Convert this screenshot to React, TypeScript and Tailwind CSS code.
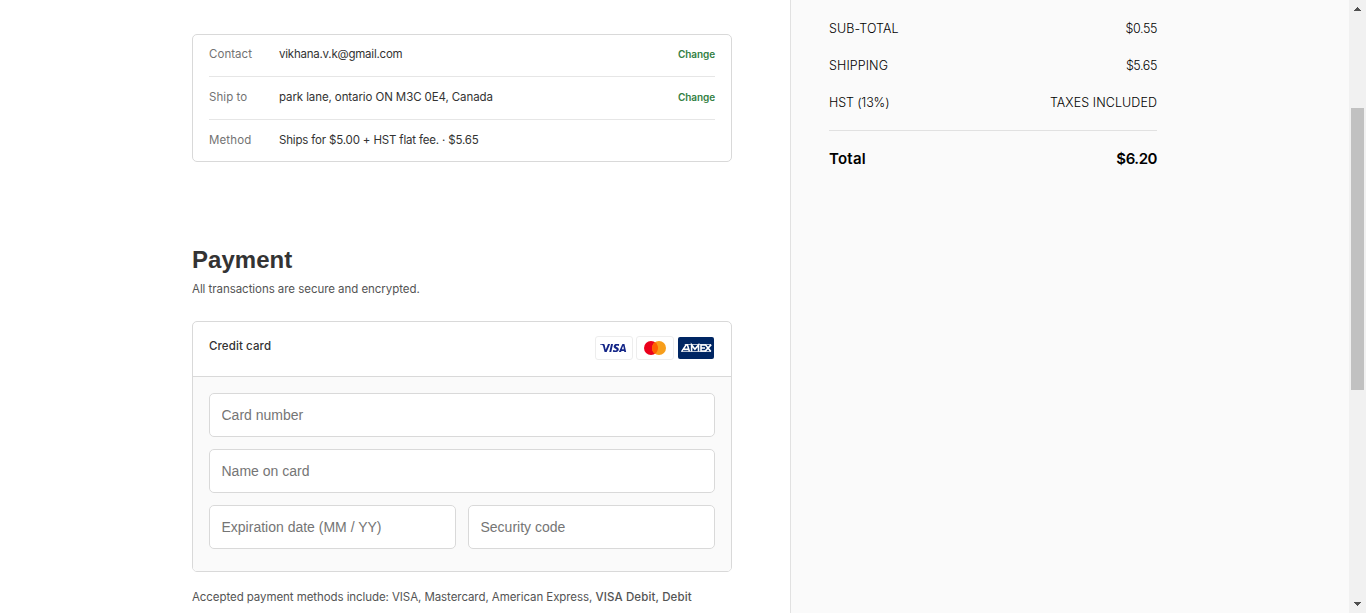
import type { ReactNode } from "react";

type ReviewRow = {
  label: string;
  labelSpacing: string;
  value: string;
  valueSpacing: string;
  editable: boolean;
};

const reviewRows: ReviewRow[] = [
  { label: "Contact", labelSpacing: "tracking-[0.04px]", value: "vikhana.v.k@gmail.com", valueSpacing: "tracking-[-0.22px]", editable: true },
  { label: "Ship to", labelSpacing: "tracking-[0.07px]", value: "park lane, ontario ON M3C 0E4, Canada", valueSpacing: "tracking-[-0.1px]", editable: true },
  { label: "Method", labelSpacing: "tracking-[0.12px]", value: "Ships for $5.00 + HST flat fee. · $5.65", valueSpacing: "tracking-[-0.165px]", editable: false },
];

const summaryRows = [
  { label: "SUB-TOTAL", labelSpacing: "tracking-[0.08px]", amount: "$0.55", amountSpacing: "tracking-[-0.4px]" },
  { label: "SHIPPING", labelSpacing: "tracking-[0.12px]", amount: "$5.65", amountSpacing: "tracking-[-0.4px]" },
  { label: "HST (13%)", labelSpacing: "tracking-[-0.12px]", amount: "TAXES INCLUDED", amountSpacing: "tracking-[0.08px]" },
];

function Field({ placeholder }: { placeholder: string }) {
  return (
    <input
      placeholder={placeholder}
      className="h-11 w-full min-w-0 rounded-[5px] border border-[#d9d9d9] bg-white px-[11.5px] font-['Liberation_Sans',sans-serif] text-sm outline-none placeholder:text-[#757575]"
    />
  );
}

function Review() {
  return (
    <section className="h-32 rounded-[5px] border border-[#d9d9d9] px-4 text-[11.5px] leading-4">
      {reviewRows.map((row, i) => (
        <div
          key={row.label}
          className={i === 0 ? "flex h-[41px] items-start pt-[11px]" : "flex h-[43px] items-start border-t border-[#e6e6e6] pt-3"}
        >
          <span className={`w-[70px] text-[#737373] ${row.labelSpacing}`}>{row.label}</span>
          <span className={`flex-1 text-[#333] ${row.valueSpacing}`}>{row.value}</span>
          {row.editable && (
            <a className="text-[10px] font-semibold leading-4 tracking-[-0.1px] text-[#338043]">Change</a>
          )}
        </div>
      ))}
    </section>
  );
}

function CardFrame({ children }: { children: ReactNode }) {
  return (
    <svg width="38" height="24" viewBox="0 0 38 24" fill="none">
      <rect x="0.5" y="0.5" width="37" height="23" rx="2.5" fill="#fff" stroke="#ededed" />
      {children}
    </svg>
  );
}

function VisaMark() {
  return (
    <CardFrame>
      <path
        transform="translate(0 0.1)"
        fill="#142688"
        d="M28.3 10.1H28c-.4 1-.7 1.5-1 3h1.9c-.3-1.5-.3-2.2-.6-3zm2.9 5.9h-1.7c-.1 0-.1 0-.2-.1l-.2-.9-.1-.2h-2.4c-.1 0-.2 0-.2.2l-.3.9c0 .1-.1.1-.1.1h-2.1l.2-.5L27 8.7c0-.5.3-.7.8-.7h1.5c.1 0 .2 0 .2.2l1.4 6.5c.1.4.2.7.2 1.1.1.1.1.1.1.2zm-13.4-.3l.4-1.8c.1 0 .2.1.2.1.7.3 1.4.5 2.1.4.2 0 .5-.1.7-.2.5-.2.5-.7.1-1.1-.2-.2-.5-.3-.8-.5-.4-.2-.8-.4-1.1-.7-1.2-1-.8-2.4-.1-3.1.6-.4.9-.8 1.7-.8 1.2 0 2.5 0 3.1.2h.1c-.1.6-.2 1.1-.4 1.7-.5-.2-1-.4-1.5-.4-.3 0-.6 0-.9.1-.2 0-.3.1-.4.2-.2.2-.2.5 0 .7l.5.4c.4.2.8.4 1.1.6.5.3 1 .8 1.1 1.4.2.9-.1 1.7-.9 2.3-.5.4-.7.6-1.4.6-1.4 0-2.5.1-3.4-.2-.1.2-.1.2-.2.1zm-3.5.3c.1-.7.1-.7.2-1 .5-2.2 1-4.5 1.4-6.7.1-.2.1-.3.3-.3H18c-.2 1.2-.4 2.1-.7 3.2-.3 1.5-.6 3-1 4.5 0 .2-.1.2-.3.2M5 8.2c0-.1.2-.2.3-.2h3.4c.5 0 .9.3 1 .8l.9 4.4c0 .1 0 .1.1.2 0-.1.1-.1.1-.1l2.1-5.1c-.1-.1 0-.2.1-.2h2.1c0 .1 0 .1-.1.2l-3.1 7.3c-.1.2-.1.3-.2.4-.1.1-.3 0-.5 0H9.7c-.1 0-.2 0-.2-.2L7.9 9.5c-.2-.2-.5-.5-.9-.6-.6-.3-1.7-.5-1.9-.5L5 8.2z"
      />
    </CardFrame>
  );
}

function MastercardMark() {
  return (
    <CardFrame>
      <circle cx="15" cy="12" r="7" fill="#eb001b" />
      <circle cx="23" cy="12" r="7" fill="#f79e1b" />
      <path fill="#ff5f00" d="M22 12c0-2.4-1.2-4.5-3-5.7-1.8 1.3-3 3.4-3 5.7s1.2 4.5 3 5.7c1.8-1.2 3-3.3 3-5.7z" />
    </CardFrame>
  );
}

function AmexMark() {
  return (
    <svg width="38" height="24" viewBox="0 0 38 24" fill="none">
      <rect x="1" y="1" width="36" height="22" rx="2" fill="#002663" />
      <path fill="#fff" fillOpacity="0.7" d="M8 8h26v1H7.4zM4 15h30v1H4z" />
      <g stroke="#fff" strokeWidth="1.6">
        <path d="M4.8 15.4 9.2 8.8h1.2l2 6.6M7 13.4h5" />
        <path d="M14.6 15.4V8.9l3.3 4.3 3.6-4.3v6.5" />
        <path d="M28.4 9H24v6h4.4M24 12h4" />
        <path d="m28.2 8.6 5.6 6.8M34.2 8.6 28 15.4" />
      </g>
    </svg>
  );
}

function Payment() {
  return (
    <section className="pt-[82px]">
      <h2 className="font-['Liberation_Sans',sans-serif] text-2xl font-bold leading-8 tracking-[0.03px] text-[#333]">Payment</h2>
      <p className="mt-[5px] text-[11.5px] leading-4 tracking-[-0.05px] text-[#545454]">All transactions are secure and encrypted.</p>
      <div className="mt-6 h-[251px] overflow-hidden rounded-[5px] border border-[#d9d9d9]">
        <div className="flex h-[55px] items-start justify-between border-b border-[#d9d9d9] pl-4 pr-4">
          <h3 className="pt-4 text-[11.5px] font-medium leading-4 tracking-[0.1px] text-[#333]">Credit card</h3>
          <div className="flex gap-[3px] pt-3.5">
            <VisaMark />
            <MastercardMark />
            <AmexMark />
          </div>
        </div>
        <div className="grid h-[195px] grid-cols-2 content-start gap-3 bg-[#fafafa] p-4">
          <div className="col-span-2 flex"><Field placeholder="Card number" /></div>
          <div className="col-span-2 flex"><Field placeholder="Name on card" /></div>
          <Field placeholder="Expiration date (MM / YY)" />
          <Field placeholder="Security code" />
        </div>
      </div>
      <p className="mt-[17px] whitespace-nowrap text-[11.5px] leading-4 tracking-[-0.075px] text-[#545454]">
        Accepted payment methods include: VISA, Mastercard, American Express,{" "}
        <strong className="font-medium tracking-[0.12px]">VISA Debit, Debit</strong>
      </p>
    </section>
  );
}

function Summary() {
  return (
    <aside className="flex-1 border-l border-[#e1e1e1] bg-[#fafafa] pl-[38px] text-black">
      <div className="w-[328px]">
        <div className="flex h-[130px] flex-col gap-[21px] pt-[21px] text-[12.5px] font-light leading-4">
          {summaryRows.map((row) => (
            <div key={row.label} className="flex justify-between">
              <span className={row.labelSpacing}>{row.label}</span>
              <span className={row.amountSpacing}>{row.amount}</span>
            </div>
          ))}
        </div>
        <div className="flex justify-between border-t border-[#e1e1e1] pt-[18px] text-[15px] font-semibold leading-5">
          <span className="tracking-[0.25px]">Total</span>
          <span className="tracking-[-0.45px]">$6.20</span>
        </div>
      </div>
    </aside>
  );
}

function Scrollbar() {
  return (
    <div className="flex w-[17px] shrink-0 flex-col items-center bg-[#f1f1f1]">
      <svg width="17" height="17" viewBox="0 0 17 17" shapeRendering="crispEdges">
        <path fill="#505050" d="M8 7h1v1h1v1h1v1h1v1H5v-1h1V9h1V8h1z" />
      </svg>
      <div className="mt-[91px] h-[282px] w-[13px] bg-[#c1c1c1]" />
      <svg className="mt-auto" width="17" height="17" viewBox="0 0 17 17" shapeRendering="crispEdges">
        <path fill="#505050" d="M5 6h7v1h-1v1h-1v1H9v1H8V9H7V8H6V7H5z" />
      </svg>
    </div>
  );
}

export default function App() {
  return (
    <div className="flex h-[613px] w-[1366px] overflow-hidden bg-white font-['Inter',sans-serif]">
      <main className="w-[790px] pl-48 pt-[34px]">
        <div className="w-[540px]">
          <Review />
          <Payment />
        </div>
      </main>
      <Summary />
      <Scrollbar />
    </div>
  );
}
